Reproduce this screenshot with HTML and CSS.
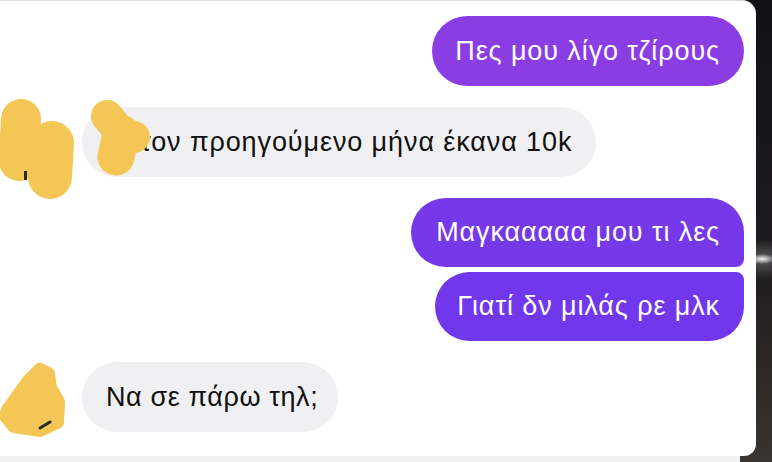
FILE: index.html
```html
<!DOCTYPE html>
<html lang="el">
<head>
<meta charset="utf-8">
<title>Chat</title>
<link rel="stylesheet" href="styles.css">
</head>
<body>
<div class="screen">
  <div class="panel">
    <div class="row out">
      <div class="bubble sent b1">Πες μου λίγο τζίρους</div>
    </div>
    <div class="row in">
      <div class="bubble recv wide">τον προηγούμενο μήνα έκανα 10k</div>
      <svg class="scribble s1" width="160" height="110" viewBox="0 0 160 110">
        <g fill="none" stroke="#f4c655" stroke-linecap="round" stroke-linejoin="round">
          <path d="M21 20 L19 62" stroke-width="40"/>
          <path d="M14 40 L30 50" stroke-width="30"/>
          <path d="M52 44 L50 78" stroke-width="44"/>
          <path d="M107 17 L121 34 L134 38" stroke-width="32"/>
          <path d="M121 34 L116 58" stroke-width="37"/>
        </g>
        <rect x="24" y="72" width="3" height="9" fill="#2a2a2a"/>
      </svg>
    </div>
    <div class="group">
      <div class="row out">
        <div class="bubble sent b2 first">Μαγκααααα μου τι λες</div>
      </div>
      <div class="row out">
        <div class="bubble sent b3 last">Γιατί δν μιλάς ρε μλκ</div>
      </div>
    </div>
    <div class="row in">
      <div class="bubble recv short">Να σε πάρω τηλ;</div>
      <svg class="scribble s2" width="90" height="90" viewBox="0 0 90 90">
        <path d="M8 58 L28 30 L40 18 L48 22 L50 36 L58 50 L57 70 L40 78 L14 74 L6 64 Z" fill="#f4c655" stroke="#f4c655" stroke-width="14" stroke-linecap="round" stroke-linejoin="round"/>
        <path d="M40 76 L50 70" stroke="#2a2a2a" stroke-width="3" stroke-linecap="round"/>
      </svg>
    </div>
  </div>
  <div class="footer"></div>
</div>
</body>
</html>
```

FILE: styles.css
```css
* { box-sizing: border-box; }

html, body {
  margin: 0;
  padding: 0;
  width: 772px;
  height: 462px;
  overflow: hidden;
}

body {
  background: linear-gradient(180deg, #121116 0%, #1d1b1e 55%, #3b332d 100%);
  font-family: "Liberation Sans", "Noto Sans", Arial, sans-serif;
}

.screen {
  position: relative;
  width: 772px;
  height: 462px;
  background:
    radial-gradient(ellipse 14px 5px at 762px 259px, rgba(255,255,255,0.95), rgba(255,255,255,0) 100%),
    radial-gradient(ellipse 30px 20px at 764px 259px, rgba(200,200,200,0.35), rgba(255,255,255,0) 100%);
}

.panel {
  width: 756px;
  height: 456px;
  background: #ffffff;
  border-top: 1px solid #dedede;
  border-radius: 0 14px 12px 0;
  padding: 15px 12px 0 0;
  display: flex;
  flex-direction: column;
  gap: 21px;
}

.footer {
  width: 740px;
  height: 6px;
  background: #f1f1f1;
}

.row {
  position: relative;
  display: flex;
}

.row.out { justify-content: flex-end; }
.row.in { justify-content: flex-start; padding-left: 82px; }

.group {
  display: flex;
  flex-direction: column;
  gap: 5px;
}

.bubble {
  height: 70px;
  display: flex;
  align-items: center;
  padding: 0 24px 0 25px;
  font-size: 27px;
  border-radius: 35px;
  white-space: nowrap;
  letter-spacing: 0.9px;
}

.sent { color: #ffffff; }
.b1 { background: #8a3de3; padding: 0 24px 0 23px; }
.b2 { background: #7639e9; height: 69px; }
.b3 { background: #7037ec; height: 69px; padding-left: 22px; }

.first { border-bottom-right-radius: 8px; }
.last { border-top-right-radius: 8px; }

.recv {
  background: #f0f0f2;
  color: #111111;
}

.wide { padding-left: 58px; }
.short { padding: 0 20px 0 24px; letter-spacing: 0.6px; }

.scribble {
  position: absolute;
  left: 0;
  pointer-events: none;
}

.s1 { top: -8px; }
.s2 { top: -10px; }
```
